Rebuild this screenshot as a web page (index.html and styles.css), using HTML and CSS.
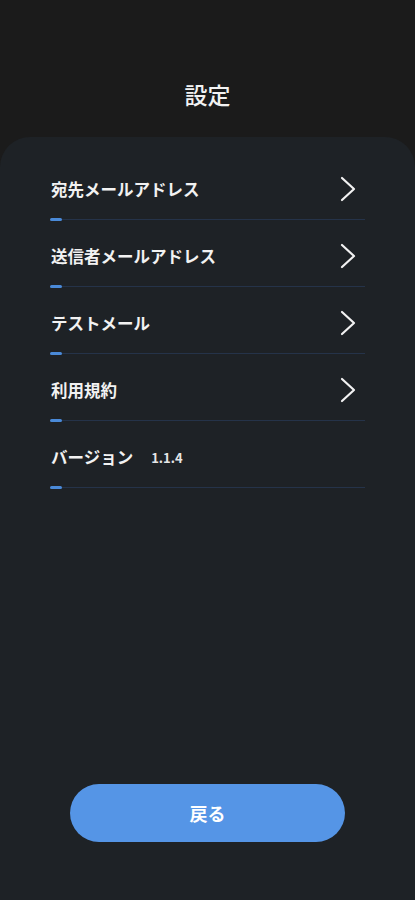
FILE: index.html
```html
<!DOCTYPE html>
<html>
<head>
  <meta charset="UTF-8">
  <title>設定</title>
  <link rel="stylesheet" href="styles.css">
</head>
<body>
<div class="header">
  <h1>設定</h1>
</div>
<div class="card">
  <ul class="menu">
    <li class="item">
      <div class="row">
        <span class="label">宛先メールアドレス</span>
        <svg class="chevron" width="20" height="26" viewBox="0 0 20 26"><path d="M4 2 L16 13 L4 24" fill="none" stroke="#f2f2f2" stroke-width="2.2" stroke-linecap="round" stroke-linejoin="round"/></svg>
      </div>
      <div class="line"></div>
    </li>
    <li class="item">
      <div class="row">
        <span class="label">送信者メールアドレス</span>
        <svg class="chevron" width="20" height="26" viewBox="0 0 20 26"><path d="M4 2 L16 13 L4 24" fill="none" stroke="#f2f2f2" stroke-width="2.2" stroke-linecap="round" stroke-linejoin="round"/></svg>
      </div>
      <div class="line"></div>
    </li>
    <li class="item">
      <div class="row">
        <span class="label">テストメール</span>
        <svg class="chevron" width="20" height="26" viewBox="0 0 20 26"><path d="M4 2 L16 13 L4 24" fill="none" stroke="#f2f2f2" stroke-width="2.2" stroke-linecap="round" stroke-linejoin="round"/></svg>
      </div>
      <div class="line"></div>
    </li>
    <li class="item">
      <div class="row">
        <span class="label">利用規約</span>
        <svg class="chevron" width="20" height="26" viewBox="0 0 20 26"><path d="M4 2 L16 13 L4 24" fill="none" stroke="#f2f2f2" stroke-width="2.2" stroke-linecap="round" stroke-linejoin="round"/></svg>
      </div>
      <div class="line"></div>
    </li>
    <li class="item">
      <div class="row">
        <span class="label">バージョン</span>
        <span class="version">1.1.4</span>
      </div>
      <div class="line"></div>
    </li>
  </ul>
  <button class="back" type="button">戻る</button>
</div>
</body>
</html>
```

FILE: styles.css
```css
body {
  margin: 0;
  background-color: #1b1b1b;
  font-family: "Noto Sans CJK JP", "Noto Sans", sans-serif;
  color: #f2f2f2;
}
.header {
  height: 137px;
  display: flex;
  justify-content: center;
  box-sizing: border-box;
  padding-top: 76px;
}
.header h1 {
  margin: 0;
  font-size: 23px;
  font-weight: 500;
  line-height: 36px;
  height: 36px;
}
.card {
  height: 763px;
  box-sizing: border-box;
  background-color: #1e2226;
  border-radius: 30px 30px 0 0;
  padding: 17px 50px 58px;
  display: flex;
  flex-direction: column;
}
.menu {
  list-style: none;
  margin: 0;
  padding: 0;
}
.item {
  padding-top: 23px;
}
.row {
  height: 24px;
  display: flex;
  align-items: center;
  padding-left: 1px;
}
.label {
  font-size: 16.5px;
  font-weight: 700;
  line-height: 24px;
}
.chevron {
  margin-left: auto;
  margin-right: 7px;
}
.version {
  margin-left: 18px;
  font-size: 13px;
  font-weight: 700;
  color: #e6e6e6;
}
.line {
  margin-top: 17px;
  height: 3px;
  width: 315px;
  background: linear-gradient(#253349, #253349) 0 1px / 100% 1px no-repeat;
  position: relative;
}
.line::before {
  content: "";
  position: absolute;
  left: 0;
  top: 0;
  width: 12px;
  height: 3px;
  border-radius: 2px;
  background-color: #4a8ad8;
}
.back {
  margin: auto 0 0 20px;
  width: 275px;
  height: 58px;
  border: none;
  border-radius: 29px;
  background-color: #5595e6;
  color: #ffffff;
  font-family: "Noto Sans CJK JP", sans-serif;
  font-size: 18px;
  font-weight: 700;
}
```
